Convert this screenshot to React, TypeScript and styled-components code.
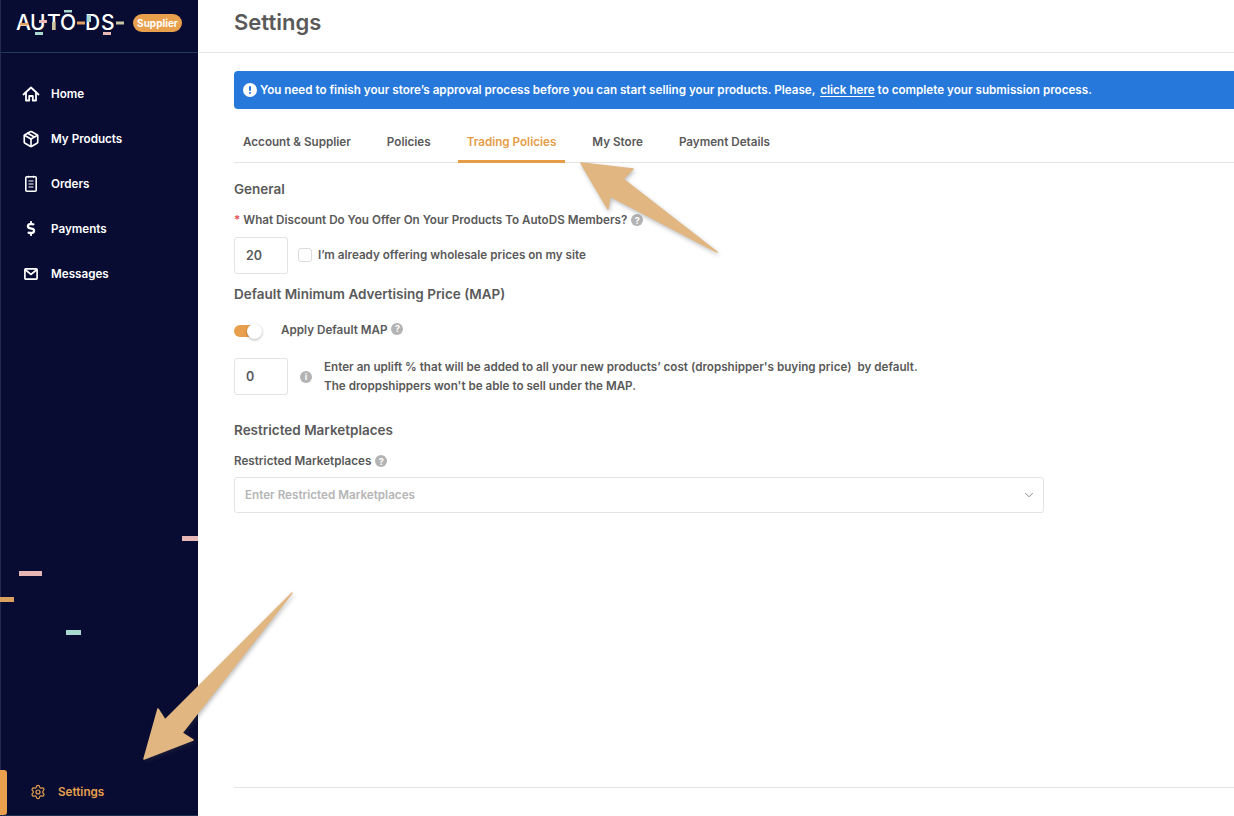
import React from 'react';
import styled, { createGlobalStyle } from 'styled-components';
import { Package, Settings as SettingsIcon, ChevronDown } from 'lucide-react';
import { FaDollarSign } from 'react-icons/fa';

const GlobalStyle = createGlobalStyle`
  html, body {
    margin: 0;
    padding: 0;
    width: 1234px;
    height: 816px;
    overflow: hidden;
    background: #fff;
    font-family: 'Inter', 'Liberation Sans', sans-serif;
    -webkit-font-smoothing: antialiased;
  }
  * { box-sizing: border-box; }
`;

const Page = styled.div`
  position: relative;
  display: flex;
  width: 1234px;
  height: 816px;
  overflow: hidden;
`;

const Sidebar = styled.aside`
  position: relative;
  flex: 0 0 198px;
  display: flex;
  flex-direction: column;
  background: #080c33;
  border-left: 1px solid #232a52;
  border-bottom: 1px solid #1c2f55;
`;

const Brand = styled.div`
  display: flex;
  align-items: center;
  height: 53px;
  padding: 0 0 6px 15px;
  gap: 7px;
  border-bottom: 1px solid #1f3a5c;
`;

const LogoSvg = styled.svg`
  overflow: visible;
  text {
    fill: #fff;
    font-family: 'Inter', sans-serif;
    font-size: 21px;
    font-weight: 500;
  }
`;

const Badge = styled.span`
  display: inline-flex;
  align-items: center;
  justify-content: center;
  width: 49px;
  height: 18px;
  border-radius: 9px;
  background: #e8a04c;
  color: #fff;
  font-size: 10px;
  font-weight: 700;
`;

const Nav = styled.nav`
  display: flex;
  flex-direction: column;
  padding-top: 18px;
`;

const NavItem = styled.a`
  display: flex;
  align-items: center;
  height: 45px;
  padding-left: 21px;
  gap: 11px;
  color: #fff;
  font-size: 11.67px;
  font-weight: 600;
  svg { flex: 0 0 18px; }
`;

const SettingsItem = styled.a`
  display: flex;
  align-items: center;
  height: 45px;
  margin-top: auto;
  padding: 0 0 2px 29px;
  gap: 12px;
  color: #e8a04c;
  font-size: 11.67px;
  font-weight: 600;
  position: relative;
  &::before {
    content: '';
    position: absolute;
    left: -1px;
    top: 0;
    width: 7px;
    height: 100%;
    border-radius: 0 3px 3px 0;
    background: #e8a04c;
  }
`;

const Confetti = styled.span<{ $x: number; $y: number; $w: number; $color: string }>`
  position: absolute;
  left: ${(p) => p.$x}px;
  top: ${(p) => p.$y}px;
  width: ${(p) => p.$w}px;
  height: 5px;
  background: ${(p) => p.$color};
`;

const Main = styled.main`
  flex: 1;
  min-width: 0;
  display: flex;
  flex-direction: column;
`;

const Header = styled.header`
  height: 53px;
  padding: 8px 0 0 36px;
  border-bottom: 1px solid #e6e6e6;
`;

const PageTitle = styled.h1`
  margin: 0;
  font-size: 22px;
  line-height: 28px;
  font-weight: 600;
  color: #595959;
`;

const Content = styled.div`
  flex: 1;
  display: flex;
  flex-direction: column;
  padding: 18px 0 0 36px;
`;

const Banner = styled.div`
  display: flex;
  align-items: center;
  gap: 3px;
  width: 1040px;
  height: 38px;
  padding: 0 0 1px 9px;
  border-radius: 4px 0 0 4px;
  background: #2678da;
  color: #fff;
  font-size: 11.67px;
  font-weight: 600;
  white-space: pre;
  u {
    margin-left: 2px;
    text-underline-offset: 2px;
  }
`;

const Tabs = styled.div`
  display: flex;
  gap: 18px;
  height: 54px;
  border-bottom: 1px solid #e4e4e4;
`;

const Tab = styled.div<{ $active?: boolean }>`
  display: flex;
  align-items: center;
  height: 54px;
  padding: 15px 9px 0;
  font-size: 11.67px;
  font-weight: 600;
  color: ${(p) => (p.$active ? '#e59c47' : '#595959')};
  border-bottom: 3px solid ${(p) => (p.$active ? '#e59c47' : 'transparent')};
`;

const SectionTitle = styled.h2<{ $top: number }>`
  margin: ${(p) => p.$top}px 0 0;
  font-size: 13.5px;
  line-height: 18px;
  font-weight: 600;
  color: #595959;
`;

const Label = styled.div<{ $top: number }>`
  display: flex;
  align-items: center;
  gap: 3px;
  margin-top: ${(p) => p.$top}px;
  height: 16px;
  font-size: 11.67px;
  font-weight: 600;
  color: #595959;
`;

const Required = styled.span`
  color: #e5484d;
`;

const Help = styled.span`
  display: inline-flex;
  align-items: center;
  justify-content: center;
  width: 12px;
  height: 12px;
  margin-left: 1px;
  border-radius: 50%;
  background: #b3b3b3;
  color: #fff;
  font-size: 9px;
  font-weight: 700;
`;

const RaisedHelp = styled(Help)`
  margin-top: -3px;
`;

const InfoMark = styled(Help)`
  margin-left: 0;
`;

const Row = styled.div<{ $top: number; $gap: number }>`
  display: flex;
  align-items: center;
  gap: ${(p) => p.$gap}px;
  margin-top: ${(p) => p.$top}px;
`;

const NumberBox = styled.div`
  display: flex;
  align-items: center;
  width: 54px;
  height: 37px;
  padding-left: 11px;
  border: 1px solid #e3e3e3;
  border-radius: 3px;
  font-size: 12.5px;
  font-weight: 600;
  color: #595959;
`;

const Checkbox = styled.span`
  width: 14px;
  height: 14px;
  margin-top: -1px;
  border: 1px solid #dcdcdc;
  border-radius: 3px;
`;

const Hint = styled.span`
  margin: -1px 0 0 -4px;
  font-size: 11.67px;
  font-weight: 600;
  color: #595959;
`;

const HintBlock = styled.div`
  padding-top: 1px;
  font-size: 11.67px;
  line-height: 19px;
  font-weight: 600;
  color: #595959;
  white-space: pre;
`;

const Toggle = styled.span`
  position: relative;
  display: block;
  width: 22px;
  height: 12px;
  margin-top: 2px;
  border-radius: 6px;
  background: #e8a04c;
  &::after {
    content: '';
    position: absolute;
    left: 13px;
    top: -1px;
    width: 15px;
    height: 15px;
    border-radius: 50%;
    background: #fff;
    box-shadow: 0 1px 3px rgba(0, 0, 0, 0.3);
  }
`;

const SelectBox = styled.div`
  display: flex;
  align-items: center;
  justify-content: space-between;
  width: 810px;
  height: 36px;
  margin-top: 8px;
  padding: 0 7px 0 10px;
  border: 1px solid #e3e3e3;
  border-radius: 3px;
  font-size: 11.67px;
  font-weight: 600;
  color: #b5b5b5;
`;

const FooterLine = styled.div`
  margin-top: auto;
  margin-bottom: 28px;
  height: 1px;
  background: #e4e4e4;
`;

const ArrowSvg = styled.svg<{ $x: number; $y: number }>`
  position: absolute;
  left: ${(p) => p.$x}px;
  top: ${(p) => p.$y}px;
  overflow: visible;
  filter: drop-shadow(1px 2px 2px rgba(60, 60, 60, 0.35));
  path {
    fill: #e1b681;
    stroke: #e1b681;
    stroke-width: 1.5;
    stroke-linejoin: round;
  }
`;

const Logo = () => (
  <LogoSvg width="110" height="36" viewBox="0 0 110 36">
    <g transform="translate(-16 -5)">
      <text x="16" y="30">A</text>
      <text x="30" y="30">U</text>
      <text x="47" y="30">T</text>
      <text x="60" y="30">O</text>
      <text x="85" y="30">D</text>
      <text x="101" y="30">S</text>
      <rect x="20" y="23" width="8" height="2.5" fill="#e0a060" />
      <rect x="39" y="20" width="8" height="3" fill="#e7b7b5" />
      <rect x="35" y="32" width="8" height="3" fill="#a8d8d0" />
      <rect x="52" y="22" width="3.5" height="8" fill="#c9c5a2" />
      <rect x="64" y="10" width="8" height="2.5" fill="#a8d8d0" />
      <rect x="77" y="21.5" width="8" height="3" fill="#e0a060" />
      <rect x="87" y="15" width="4" height="7" fill="#a8d8d0" />
      <rect x="103" y="32" width="8" height="3" fill="#e7b7b5" />
      <rect x="116" y="21.5" width="8" height="3" fill="#c9c5a2" />
    </g>
  </LogoSvg>
);

const HomeIcon = () => (
  <svg width="18" height="18" viewBox="0 0 18 18" fill="none" stroke="#fff" strokeWidth="1.8" strokeLinejoin="round" strokeLinecap="round">
    <path d="M1.5 9.5 L9 2.5 L16.5 9.5" />
    <path d="M4 7.5 V15.5 H7.2 V11 H10.8 V15.5 H14 V7.5" />
  </svg>
);

const OrdersIcon = () => (
  <svg width="18" height="18" viewBox="0 0 18 18" fill="none" stroke="#fff" strokeWidth="1.6">
    <rect x="3.8" y="1.8" width="10.4" height="14.4" rx="1" />
    <path d="M6.5 .8v2M11.5 .8v2M6.5 6h5M6.5 9h5M6.5 12h5" strokeWidth="1.2" />
  </svg>
);

const MessagesIcon = () => (
  <svg width="18" height="18" viewBox="0 0 18 18" fill="none" stroke="#fff" strokeWidth="1.7">
    <rect x="2.9" y="3.9" width="12.2" height="10.2" rx="0.8" />
    <path d="M3 4.5 L9 9.5 L15 4.5" />
  </svg>
);

const BannerIcon = () => (
  <svg width="14" height="14" viewBox="0 0 14 14">
    <circle cx="7" cy="7" r="7" fill="#fff" />
    <rect x="6" y="3" width="2" height="5" rx="1" fill="#2678da" />
    <circle cx="7" cy="10" r="1.1" fill="#2678da" />
  </svg>
);

const App = () => {
  return (
    <Page>
      <GlobalStyle />
      <Sidebar>
        <Brand>
          <Logo />
          <Badge>Supplier</Badge>
        </Brand>
        <Nav>
          <NavItem><HomeIcon />Home</NavItem>
          <NavItem><Package size={18} strokeWidth={2.2} />My Products</NavItem>
          <NavItem><OrdersIcon />Orders</NavItem>
          <NavItem><FaDollarSign size={15} />Payments</NavItem>
          <NavItem><MessagesIcon />Messages</NavItem>
        </Nav>
        <SettingsItem><SettingsIcon size={16} strokeWidth={1.8} />Settings</SettingsItem>
        <Confetti $x={181} $y={536} $w={16} $color="#e7b7b5" />
        <Confetti $x={18} $y={571} $w={23} $color="#e7b7b5" />
        <Confetti $x={-1} $y={597} $w={14} $color="#d9a05f" />
        <Confetti $x={65} $y={630} $w={15} $color="#a8d8d0" />
      </Sidebar>
      <Main>
        <Header>
          <PageTitle>Settings</PageTitle>
        </Header>
        <Content>
          <Banner>
            <BannerIcon />
            <span>
              You need to finish your store’s approval process before you can start selling your products. Please,{' '}
              <u>click here</u> to complete your submission process.
            </span>
          </Banner>
          <Tabs>
            <Tab>Account &amp; Supplier</Tab>
            <Tab>Policies</Tab>
            <Tab $active>Trading Policies</Tab>
            <Tab>My Store</Tab>
            <Tab>Payment Details</Tab>
          </Tabs>
          <SectionTitle $top={17}>General</SectionTitle>
          <Label $top={14}>
            <Required>*</Required> What Discount Do You Offer On Your Products To AutoDS Members? <Help>?</Help>
          </Label>
          <Row $top={9} $gap={10}>
            <NumberBox>20</NumberBox>
            <Checkbox />
            <Hint>I’m already offering wholesale prices on my site</Hint>
          </Row>
          <SectionTitle $top={11}>Default Minimum Advertising Price (MAP)</SectionTitle>
          <Row $top={19} $gap={25}>
            <Toggle />
            <Label $top={0}>Apply Default MAP <RaisedHelp>?</RaisedHelp></Label>
          </Row>
          <Row $top={19} $gap={12}>
            <NumberBox>0</NumberBox>
            <InfoMark>i</InfoMark>
            <HintBlock>
              {"Enter an uplift % that will be added to all your new products’ cost (dropshipper's buying price)  by default.\nThe droppshippers won't be able to sell under the MAP."}
            </HintBlock>
          </Row>
          <SectionTitle $top={25}>Restricted Marketplaces</SectionTitle>
          <Label $top={14}>Restricted Marketplaces <Help>?</Help></Label>
          <SelectBox>
            Enter Restricted Marketplaces
            <ChevronDown size={14} color="#777" strokeWidth={1.5} />
          </SelectBox>
          <FooterLine />
        </Content>
      </Main>
      <ArrowSvg $x={581} $y={163} width="136" height="89" viewBox="581 163 136 89">
        <path d="M581 163 L633 169 L623 179 L717 252 L610 196 L608 209 Z" />
      </ArrowSvg>
      <ArrowSvg $x={144} $y={593} width="148" height="166" viewBox="144 593 148 166">
        <path d="M144 759 L193 740 L182 733 L292 593 L165 720 L158 709 Z" />
      </ArrowSvg>
    </Page>
  );
};

export default App;
